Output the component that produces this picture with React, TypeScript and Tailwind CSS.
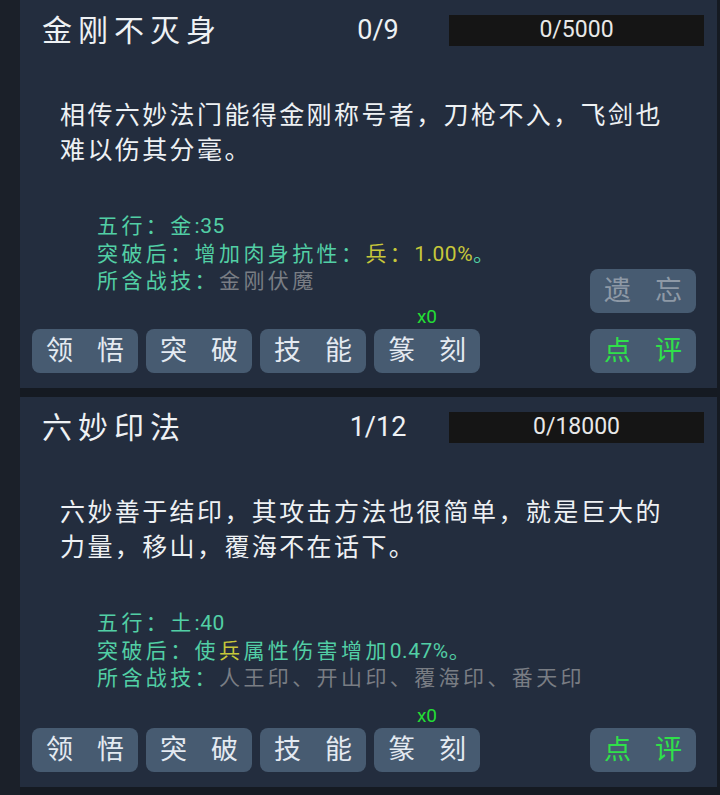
import React from "react";

const FONT = { fontFamily: 'Roboto, "Noto Sans CJK SC", sans-serif' };

type Seg = { t: string; c: string };

function Btn({ a, b, color = "text-[#e4eaf1]" }: { a: string; b: string; color?: string }) {
  return (
    <div className={`w-[106px] h-[44px] rounded-[8px] bg-[#475b71] flex items-center justify-center gap-[24px] text-[27px] leading-none ${color}`}>
      <span>{a}</span>
      <span>{b}</span>
    </div>
  );
}

function Runs({ text }: { text: string }) {
  const parts = text.split(/([\x00-\x7F]+)/).filter((p) => p.length > 0);
  return (
    <>
      {parts.map((p, i) =>
        /^[\x00-\x7F]+$/.test(p) ? (
          <span key={i} className="tracking-[0.5px]">{p}</span>
        ) : (
          <span key={i} className="tracking-[3.4px]">{p}</span>
        )
      )}
    </>
  );
}

function Card({
  title,
  count,
  bar,
  desc,
  stats,
  forget,
  height,
}: {
  title: string;
  count: string;
  bar: string;
  desc: string[];
  stats: Seg[][];
  forget: boolean;
  height: string;
}) {
  return (
    <div className={`w-[697px] ${height} bg-[#232d3e] flex flex-col`}>
      <div className="flex items-center pt-[15px] pl-[22px]">
        <div className="w-[290px] text-[30px] leading-[31px] tracking-[6px] text-[#eef1f4]">{title}</div>
        <div className="w-[92px] text-center text-[27px] leading-[31px] text-[#eef1f4]">{count}</div>
        <div className="ml-[25px] w-[255px] h-[31px] bg-[#151515] flex items-center justify-center text-[23px] text-[#e8e8e8]">
          {bar}
        </div>
      </div>
      <div className="mt-[52px] pl-[40px] text-[25px] leading-[35px] tracking-[2.4px] text-[#eef1f4]">
        {desc.map((d, i) => (
          <div key={i}>{d}</div>
        ))}
      </div>
      <div className="flex flex-1 pb-[15px]">
        <div className="w-[472px] flex flex-col">
          <div className="mt-[45px] pl-[77px] text-[21px] leading-[27.5px] whitespace-nowrap">
            {stats.map((line, i) => (
              <div key={i}>
                {line.map((s, j) => (
                  <span key={j} className={s.c}>
                    <Runs text={s.t} />
                  </span>
                ))}
              </div>
            ))}
          </div>
          <div className="mt-auto pl-[12px] flex gap-[8px]">
            <Btn a="领" b="悟" />
            <Btn a="突" b="破" />
            <Btn a="技" b="能" />
            <div className="relative">
              <div className="absolute -top-[22px] left-0 w-full text-center text-[19px] leading-[20px] text-[#23dd35]">x0</div>
              <Btn a="篆" b="刻" />
            </div>
          </div>
        </div>
        <div className="ml-[98px] flex flex-col justify-end gap-[16px]">
          {forget && <Btn a="遗" b="忘" color="text-[#8e99a6]" />}
          <Btn a="点" b="评" color="text-[#2fe04a]" />
        </div>
      </div>
    </div>
  );
}

export default function App() {
  const teal = "text-[#52cfa5]";
  const yellow = "text-[#c8c83a]";
  const gray = "text-[#797d84]";
  return (
    <div className="w-[720px] h-[795px] bg-[#151a22] flex overflow-hidden" style={FONT}>
      <div className="w-[20px] h-full bg-[#1b2029]" />
      <div className="flex flex-col gap-[9px]">
        <Card
          title="金刚不灭身"
          count="0/9"
          bar="0/5000"
          height="h-[388px]"
          desc={["相传六妙法门能得金刚称号者，刀枪不入，飞剑也", "难以伤其分毫。"]}
          stats={[
            [{ t: "五行：金:35", c: teal }],
            [
              { t: "突破后：增加肉身抗性：", c: teal },
              { t: "兵：1.00%", c: yellow },
              { t: "。", c: teal },
            ],
            [
              { t: "所含战技：", c: teal },
              { t: "金刚伏魔", c: gray },
            ],
          ]}
          forget={true}
        />
        <Card
          title="六妙印法"
          count="1/12"
          bar="0/18000"
          height="h-[390px]"
          desc={["六妙善于结印，其攻击方法也很简单，就是巨大的", "力量，移山，覆海不在话下。"]}
          stats={[
            [{ t: "五行：土:40", c: teal }],
            [
              { t: "突破后：使", c: teal },
              { t: "兵", c: yellow },
              { t: "属性伤害增加0.47%。", c: teal },
            ],
            [
              { t: "所含战技：", c: teal },
              { t: "人王印、开山印、覆海印、番天印", c: gray },
            ],
          ]}
          forget={false}
        />
      </div>
    </div>
  );
}
